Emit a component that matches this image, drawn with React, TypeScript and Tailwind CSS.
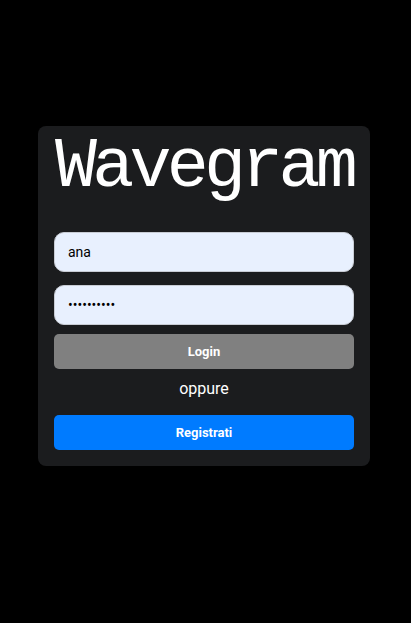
export default function App() {
  return (
    <div className="flex min-h-[623px] items-start justify-center bg-black pt-[126px] pr-[3px] font-['Roboto',Arial,sans-serif]">
      <div className="flex w-[332px] flex-col rounded-lg bg-[#1b1c1e] px-4 pb-4">
        <h1 className="text-center font-['Liberation_Mono','Courier_New',monospace] text-[70px] leading-[84px] tracking-[-4.75px] text-white">
          Wavegram
        </h1>
        <input
          className="mt-[22px] h-10 w-full rounded-[10px] border border-[#c8ccd4] bg-[#e8f0fe] px-[13px] text-sm text-black outline-none"
          defaultValue="ana"
        />
        <input
          type="password"
          className="mt-[13px] h-10 w-full rounded-[10px] border border-[#c8ccd4] bg-[#e8f0fe] px-[13px] text-sm text-black outline-none"
          defaultValue="mypassword"
        />
        <button className="mt-[9px] h-[35px] w-full rounded-[5px] bg-[#808080] text-[13px] font-bold text-white">
          Login
        </button>
        <p className="mt-[9px] text-center text-base leading-[22px] text-white">oppure</p>
        <button className="mt-[15px] h-[35px] w-full rounded-[5px] bg-[#007bff] text-[13px] font-bold text-white">
          Registrati
        </button>
      </div>
    </div>
  )
}
